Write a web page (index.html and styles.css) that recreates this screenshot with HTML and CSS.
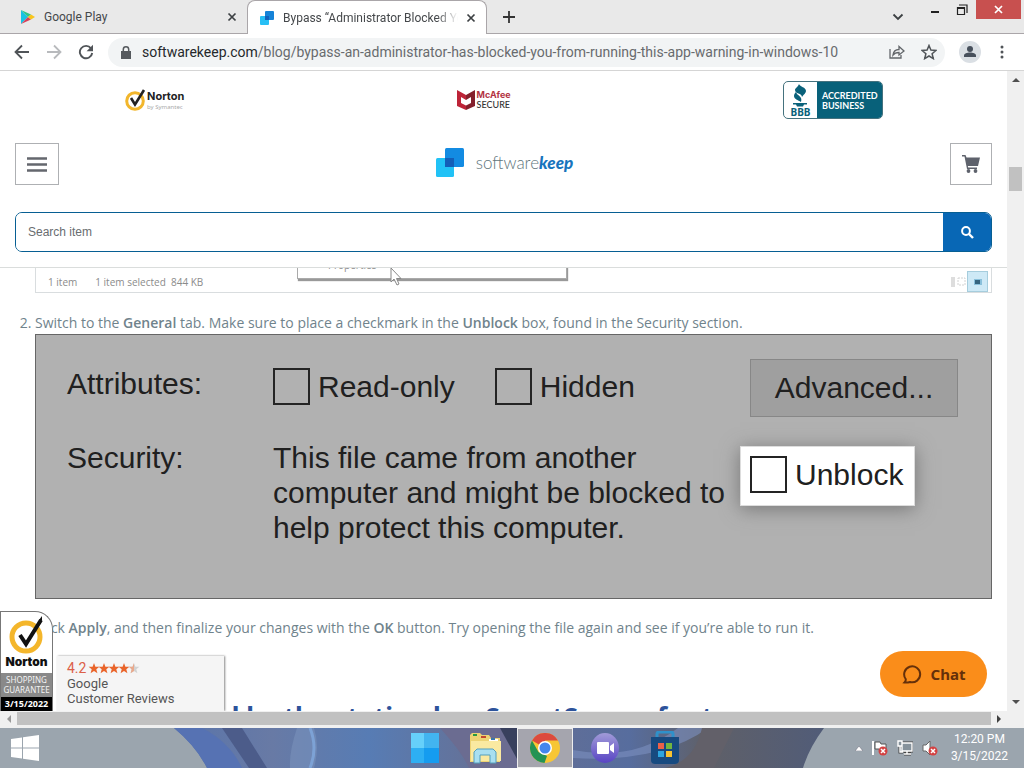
FILE: index.html
```html
<!DOCTYPE html>
<html lang="en">
<head>
<meta charset="utf-8">
<title>Bypass "Administrator Blocked You"</title>
<link rel="stylesheet" href="styles.css">
</head>
<body>
<div class="tabs">
  <div class="tab">
    <svg width="16" height="16" viewBox="0 0 16 16"><path d="M1 1v14l7-7z" fill="#18c3e4"/><path d="M1 1l7 7 3-2.5z" fill="#2fc58a"/><path d="M1 15l7-7 3 2.5z" fill="#d9415a"/><path d="M11 5.5L15 8l-4 2.5L8 8z" fill="#f8c51c"/></svg>
    <span class="tab-title">Google Play</span>
    <button class="icon-btn" aria-label="Close tab"><svg width="10" height="10" viewBox="0 0 10 10"><path d="M1.5 1.5l7 7m0-7l-7 7" stroke="#3c4043" stroke-width="1.7"/></svg></button>
  </div>
  <div class="tab tab-active">
    <svg width="16" height="16" viewBox="0 0 16 16"><rect x="1" y="6" width="9" height="9" rx="1" fill="#27bff5"/><rect x="6" y="1" width="9" height="9" rx="1" fill="#1583d8"/><path d="M6 6h4v4H6z" fill="#1262bd"/></svg>
    <span class="tab-title tab-fade">Bypass “Administrator Blocked You</span>
    <button class="icon-btn" aria-label="Close tab"><svg width="10" height="10" viewBox="0 0 10 10"><path d="M1.5 1.5l7 7m0-7l-7 7" stroke="#3c4043" stroke-width="1.7"/></svg></button>
  </div>
  <button class="icon-btn new-tab" aria-label="New tab"><svg width="14" height="14" viewBox="0 0 14 14"><path d="M7 1v12M1 7h12" stroke="#333" stroke-width="1.8"/></svg></button>
  <div class="window-controls">
    <button class="icon-btn tab-search" aria-label="Search tabs"><svg width="12" height="8" viewBox="0 0 12 8"><path d="M1.5 1.5L6 6l4.500-4.500" fill="none" stroke="#3c4043" stroke-width="1.8"/></svg></button>
    <button class="icon-btn" aria-label="Minimize"><svg width="10" height="12" viewBox="0 0 10 12"><path d="M1 8h8" stroke="#222" stroke-width="2"/></svg></button>
    <button class="icon-btn" aria-label="Restore"><svg width="12" height="12" viewBox="0 0 12 12"><path d="M1.500 3.500h7v7h-7zM3 1h8v8M1 4.500h8" fill="none" stroke="#222" stroke-width="1.200"/></svg></button>
    <button class="close-window" aria-label="Close"><svg width="9" height="9" viewBox="0 0 9 9"><path d="M1 1l7 7m0-7l-7 7" stroke="#fff" stroke-width="1.700"/></svg></button>
  </div>
</div>
<div class="toolbar">
  <button class="icon-btn" aria-label="Back"><svg width="16" height="16" viewBox="0 0 16 16"><path d="M15 8H2m6-6.500L1.500 8 8 14.500" fill="none" stroke="#505458" stroke-width="1.800"/></svg></button>
  <button class="icon-btn" aria-label="Forward"><svg width="16" height="16" viewBox="0 0 16 16"><path d="M1 8h13M8 1.500L14.500 8 8 14.500" fill="none" stroke="#b8babd" stroke-width="1.800"/></svg></button>
  <button class="icon-btn" aria-label="Reload"><svg width="16" height="16" viewBox="0 0 16 16"><path d="M13 4.300A6.200 6.200 0 1 0 14.200 9" fill="none" stroke="#505458" stroke-width="1.900"/><path d="M15 .8v6.400H8.600z" fill="#505458"/></svg></button>
  <div class="address">
    <svg width="10" height="13" viewBox="0 0 10 13"><path d="M0 5h10v8H0z" fill="#55595d"/><path d="M2.300 5V3.500a2.700 2.700 0 0 1 5.400 0V5" fill="none" stroke="#55595d" stroke-width="1.500"/></svg>
    <span class="url"><b>softwarekeep.com</b>/blog/bypass-an-administrator-has-blocked-you-from-running-this-app-warning-in-windows-10</span>
    <button class="icon-btn" aria-label="Share"><svg width="16" height="14" viewBox="0 0 16 14"><path d="M1 4v9h11v-3M4 10c.5-4 3-5.500 6-5.500V1.500L15 6l-5 4V7.500C7.500 7.500 5.500 8 4 10z" fill="none" stroke="#62666a" stroke-width="1.300"/></svg></button>
    <button class="icon-btn" aria-label="Bookmark"><svg width="16" height="16" viewBox="0 0 16 16"><path d="M8 1.500l1.900 4.600 5 .4-3.800 3.200 1.200 4.900L8 12l-4.300 2.600 1.200-4.900L1.100 6.500l5-.4z" fill="none" stroke="#505458" stroke-width="1.500"/></svg></button>
  </div>
  <button class="icon-btn" aria-label="Profile"><svg width="22" height="22" viewBox="0 0 22 22"><circle cx="11" cy="11" r="11" fill="#dadfe4"/><circle cx="11" cy="8" r="3" fill="#47505c"/><path d="M5 16v-1.500c0-2 3-3 6-3s6 1 6 3V16z" fill="#47505c"/></svg></button>
  <button class="icon-btn" aria-label="Menu"><svg width="6" height="16" viewBox="0 0 6 16" fill="#505458"><circle cx="3" cy="3" r="1.500"/><circle cx="3" cy="8" r="1.500"/><circle cx="3" cy="13" r="1.500"/></svg></button>
</div>
<div class="viewport">
  <div class="page">
    <header class="site-header">
      <div class="trust">
        <div class="norton">
          <svg width="22" height="22" viewBox="0 0 22 22"><circle cx="10" cy="12" r="8.300" fill="none" stroke="#f2b62c" stroke-width="3"/><path d="M6 9l4 6.500L19 1" fill="none" stroke="#222" stroke-width="2.600"/></svg>
          <div><strong>Norton</strong><small>by Symantec</small></div>
        </div>
        <div class="mcafee">
          <svg width="18" height="20" viewBox="0 0 18 20"><path d="M0 0l9 5v5L4 7v6l5 2.500V20l-9-4z" fill="#bd2438"/><path d="M18 0L9 5v5l5-3v6l-5 2.500V20l9-4z" fill="#84202b"/></svg>
          <div><strong>McAfee</strong><span>SECURE</span></div>
        </div>
        <div class="bbb">
          <div class="bbb-mark"><svg width="16" height="23" viewBox="0 0 16 23" fill="#09617a"><path d="M7 0c1 3 7 3 7 7 0 2-2 3-4 6 0-4-7-3-7-7 0-2 3-3 4-6z"/><path d="M4 8c1 4 7 4 5 10-3-2-7-3-7-6 0-2 1-3 2-4zM1 19h14v1.500h-3l-1 2H5l-1-2H1z"/></svg><b>BBB</b></div>
          <div class="bbb-text">ACCREDITED<br>BUSINESS</div>
        </div>
      </div>
      <div class="brand-row">
        <button class="square menu" aria-label="Open menu"><svg width="20" height="15" viewBox="0 0 20 15"><path d="M0 1.500h20M0 7.500h20M0 13.500h20" stroke="#64676e" stroke-width="2.400"/></svg></button>
        <a class="brand" href="#"><svg width="28" height="29" viewBox="0 0 28 29"><rect y="10" width="18" height="19" rx="1.500" fill="#21c2f6"/><rect x="9" width="19" height="19" rx="1.500" fill="#138be2"/><path d="M9 10h9v9H9z" fill="#135eb8"/></svg><span>software<b>keep</b></span></a>
        <button class="square" aria-label="Cart"><svg width="18" height="18" viewBox="0 0 18 18"><path d="M0 0h3.500L4.500 2.500H18L16 11H5.800l.4 1.500H15V14H5L2.500 1.500H0z" fill="#5e626c"/><circle cx="6.500" cy="16" r="1.900" fill="#5e626c"/><circle cx="13.500" cy="16" r="1.900" fill="#5e626c"/></svg></button>
      </div>
      <form class="search">
        <input type="text" placeholder="Search item" aria-label="Search item">
        <button type="button" aria-label="Search"><svg width="13" height="13" viewBox="0 0 13 13"><circle cx="5" cy="5" r="3.900" fill="none" stroke="#fff" stroke-width="2"/><path d="M8 8l4 4" stroke="#fff" stroke-width="2.400"/></svg></button>
      </form>
    </header>
    <main class="article">
      <div class="explorer">
        <span>1 item</span><span>1 item selected&nbsp; 844 KB</span>
        <div class="context"><span>Properties</span><svg width="13" height="20" viewBox="0 0 13 20"><path d="M1 1v14l3-3 3 6 2-1-2.500-5.500H11z" fill="#fff" stroke="#888"/></svg></div>
        <div class="views"><svg width="16" height="12" viewBox="0 0 16 12"><path d="M1 1h4v10H1z" fill="#ddd"/><path d="M8 2h7v7H8z" fill="none" stroke="#d2d2d2" stroke-dasharray="2 1"/></svg><i><svg width="8" height="6" viewBox="0 0 8 6"><path d="M0 0h8v6H0z" fill="#8ac0db"/><path d="M1 1h5v4H1z" fill="#36647e"/></svg></i></div>
      </div>
      <ol start="2">
        <li>Switch to the <b>General</b> tab. Make sure to place a checkmark in the <b>Unblock</b> box, found in the Security section.
          <div class="properties">
            <span>Attributes:</span>
            <div class="checks">
              <label><input type="checkbox">Read-only</label>
              <label><input type="checkbox">Hidden</label>
            </div>
            <button>Advanced...</button>
            <span class="security">Security:</span>
            <p>This file came from another<br>computer and might be blocked to<br>help protect this computer.</p>
            <label class="unblock"><input type="checkbox">Unblock</label>
          </div>
        </li>
        <li>Click <b>Apply</b>, and then finalize your changes with the <b>OK</b> button. Try opening the file again and see if you’re able to run it.</li>
      </ol>
      <h2>d by the station has SmartScreen for t</h2>
    </main>
    <aside class="guarantee">
      <div class="guarantee-top"><svg width="38" height="38" viewBox="0 0 38 38"><circle cx="18" cy="21" r="14" fill="none" stroke="#f4b62b" stroke-width="5"/><path d="M12 19l6 9L33 4" fill="none" stroke="#111" stroke-width="4"/><path d="M31 4l3-4v5z" fill="#111"/></svg><b>Norton</b></div>
      <div class="guarantee-mid">SHOPPING<br>GUARANTEE</div>
      <div class="guarantee-date">3/15/2022</div>
    </aside>
    <aside class="reviews">
      <div class="rating">4.2 <svg width="52" height="11" viewBox="0 0 52 11"><defs><path id="star" d="M5 0l1.400 3.700 4 .1-3.100 2.500 1.100 4L5 8 1.600 10.300l1.100-4L-.4 3.800l4-.1z"/></defs><g fill="#e9642a"><use href="#star" x="1"/><use href="#star" x="11"/><use href="#star" x="21"/><use href="#star" x="31"/></g><use href="#star" x="41" fill="#d2d2d2"/><path d="M41 3.800l3.500-.1L46 0v8l-3.400 2.300 1-4z" fill="#e9a98c"/></svg></div>
      <span>Google</span><span>Customer Reviews</span>
    </aside>
    <button class="chat"><svg width="20" height="20" viewBox="0 0 20 20"><path d="M2.500 18.500c1-1 1.500-2 1.200-3.500A8 8 0 1 1 8 18c-2 .6-3.500.7-5.500.5z" fill="none" stroke="#65300a" stroke-width="2"/></svg>Chat</button>
  </div>
  <div class="vscroll"><svg width="8" height="4" viewBox="0 0 8 4"><path d="M0 4l4-4 4 4z" fill="#505050"/></svg><div class="vthumb"></div><svg width="8" height="4" viewBox="0 0 8 4"><path d="M0 0l4 4 4-4z" fill="#505050"/></svg></div>
</div>
<div class="hscroll"><svg width="4" height="8" viewBox="0 0 4 8"><path d="M4 0L0 4l4 4z" fill="#999"/></svg><div class="hthumb"></div><svg width="4" height="8" viewBox="0 0 4 8"><path d="M0 0l4 4-4 4z" fill="#404040"/></svg></div>
<footer class="taskbar">
  <svg class="wallpaper" viewBox="0 0 1024 40" preserveAspectRatio="none">
    <defs><linearGradient id="wall"><stop offset="0" stop-color="#5974aa"/><stop offset=".15" stop-color="#687aa5"/><stop offset=".3" stop-color="#577cb4"/><stop offset=".5" stop-color="#686f91"/><stop offset=".7" stop-color="#576d9e"/><stop offset=".82" stop-color="#5f6068"/><stop offset="1" stop-color="#515c78"/></linearGradient></defs>
    <path d="M0 0h1024v40H0z" fill="#9ba5ae"/><path d="M174 0h650q-15 20-21 40H207Q196 18 174 0z" fill="url(#wall)"/>
    <path d="M174 0h28q28 14 40 40h-35Q196 18 174 0z" fill="#5672b3"/><path d="M222 0h20l25 40h-18z" fill="#4c5c8a"/>
    <path d="M297 0q-8 24-7 40h24q6-22 0-40z" fill="#8099c2" opacity=".45"/><path d="M310 0q8 20 0 40" fill="none" stroke="#7da2d5" stroke-width="3"/>
    <path d="M440 0q22 24 29 40h48V0z" fill="#6b6c91"/><path d="M500 0l22 40h30V0z" fill="#38405d"/><path d="M573 22q60 12 105-22h30q-48 35-135 30z" fill="#7c8fc0" opacity=".6"/>
    <path d="M665 40q30-7 37-40h32l-20 40z" fill="#626069"/>
  </svg>
  <button class="task start" aria-label="Start"><svg width="28" height="26" viewBox="0 0 28 26"><path d="M0 4l11-1.500v10H0zM12 2.300L28 0v12.500H12zM0 13.500h11v10L0 22zM12 13.500h16V26l-16-2.300z" fill="#fff"/></svg></button>
  <div class="tasks">
    <button class="task" aria-label="Windows"><svg width="28" height="30" viewBox="0 0 28 30"><path d="M0 0h13v15H0z" fill="#66d0fa"/><path d="M13 0h15v15H13z" fill="#42b4f0"/><path d="M0 15h13v15H0z" fill="#2eaff3"/><path d="M13 15h15v15H13z" fill="#159cf0"/></svg></button>
    <button class="task" aria-label="File Explorer"><svg width="34" height="32" viewBox="0 0 34 32"><path d="M2 3l2-2h8l2 2h7l2 3h9v24H2z" fill="#edd374"/><path d="M3 9h30v20H3z" fill="#fae9a1"/><path d="M5 2h4v2H5z" fill="#2a9a42"/><path d="M13 4h5v2h-5z" fill="#c4472f"/><path d="M21 7h9v2h-9z" fill="#fff"/><path d="M23 6h4v2h-4z" fill="#3977ad"/><path d="M6 31V20l3-3h16l3 3v11h-6v-8H12v8z" fill="#a9dff0" stroke="#559fbd"/></svg></button>
    <button class="task current" aria-label="Chrome"><svg width="30" height="30" viewBox="0 0 30 30"><circle cx="15" cy="15" r="15" fill="#f7c634"/><path d="M15 15L2 7.500A15 15 0 0 1 28 7.500H15z" fill="#dc4a3e"/><path d="M2 7.500L8.500 19 15 22l2 1-2.500 7A15 15 0 0 1 2 7.500z" fill="#249354"/><circle cx="15" cy="15" r="7" fill="#fff"/><circle cx="15" cy="15" r="5.500" fill="#4486ed"/></svg></button>
    <button class="task" aria-label="Meet"><svg width="28" height="30" viewBox="0 0 28 30"><defs><linearGradient id="meet" x2="0" y2="1"><stop stop-color="#a19bd8"/><stop offset="1" stop-color="#5844c4"/></linearGradient></defs><ellipse cx="14" cy="15" rx="14" ry="15" fill="url(#meet)"/><rect x="6" y="9" width="12" height="12" rx="1" fill="#fff"/><path d="M19 13l4-3v10l-4-3z" fill="#fff"/></svg></button>
    <button class="task" aria-label="Store"><svg width="30" height="34" viewBox="0 0 30 34"><path d="M7 7V3q0-2 2-2h12q2 0 2 2v4" fill="none" stroke="#2f91ca" stroke-width="3"/><path d="M1 6h28v23q0 4-4 4H5q-4 0-4-4z" fill="#174a80"/><path d="M8 12h6v6H8z" fill="#ec6148"/><path d="M16 12h6v6h-6z" fill="#72b540"/><path d="M8 20h6v6H8z" fill="#2ca5e0"/><path d="M16 20h6v6h-6z" fill="#f7c331"/></svg></button>
  </div>
  <div class="tray">
    <svg width="8" height="5" viewBox="0 0 8 5"><path d="M0 5l4-5 4 5z" fill="#fff" stroke="#667" stroke-width=".5"/></svg>
    <svg width="16" height="16" viewBox="0 0 16 16"><path d="M1 1v14" stroke="#fff" stroke-width="2"/><path d="M3 2h5l1 2h5v6H8L7 9H3z" fill="#fff" stroke="#555"/><circle cx="11" cy="11" r="4.500" fill="#d34242"/><path d="M9 9l4 4m0-4l-4 4" stroke="#fff" stroke-width="1.500"/></svg>
    <svg width="16" height="16" viewBox="0 0 16 16"><path d="M5 3h10v8H5zM7 14h7M10 11v3M3 6v6h3" fill="none" stroke="#444" stroke-width="3"/><path d="M5 3h10v8H5zM7 14h7M10 11v3M3 6v6h3M1 1h4v5H1z" fill="#87939c" stroke="#fff" stroke-width="1.400"/></svg>
    <svg width="16" height="16" viewBox="0 0 16 16"><path d="M1 5h3l4-4v14l-4-4H1z" fill="#fff" stroke="#666"/><circle cx="11" cy="11" r="4.500" fill="#d34242"/><path d="M9 9l4 4m0-4l-4 4" stroke="#fff" stroke-width="1.500"/></svg>
    <div class="clock">12:20 PM<br>3/15/2022</div>
  </div>
</footer>
</body>
</html>
```
FILE: styles.css
```css
* { box-sizing: border-box; }
body { margin: 0; height: 100vh; display: flex; flex-direction: column; overflow: hidden; background: #fff; font-family: "Noto Sans", sans-serif; }
button { font-family: inherit; padding: 0; border: 0; background: none; }
svg { display: block; flex: none; }

.icon-btn { display: flex; align-items: center; justify-content: center; flex: none; }
.tabs { display: flex; flex: none; height: 34px; background: #e9e9e9; border-bottom: 1px solid #aaa6a9; }
.tab { width: 247px; display: flex; align-items: center; gap: 8px; padding: 0 10px 0 20px; font-size: 12px; color: #45484b; }
.tab-title { flex: 1; overflow: hidden; white-space: nowrap; font-family: Roboto, sans-serif; }
.tab-active { width: 240px; height: 34px; padding: 0 10px 0 11px; background: #fff; border: 1px solid #aaa6a9; border-bottom: 0; border-radius: 8px 8px 0 0; }
.tab-fade { mask-image: linear-gradient(90deg, #000 88%, transparent); }
.new-tab { width: 44px; }
.window-controls { margin-left: auto; display: flex; align-items: flex-start; gap: 16px; padding-right: 3px; }
.window-controls .icon-btn { height: 20px; }
.window-controls .tab-search { height: 34px; margin-right: 10px; }
.close-window { width: 45px; height: 19px; margin-left: -8px; display: flex; align-items: center; justify-content: center; background: #c8504f; }

.toolbar { display: flex; flex: none; align-items: center; height: 37px; gap: 16px; padding: 0 19px 0 14px; border-bottom: 1px solid #d5d5d5; }
.toolbar > :last-child { margin-left: 2px; }
.address { flex: 1; min-width: 0; height: 29px; display: flex; align-items: center; gap: 16px; padding: 0 8px 0 13px; margin: 0 -2px; border-radius: 15px; background: #f2f4f5; }
.url { flex: 1; overflow: hidden; white-space: nowrap; font: 14px/20px Roboto, sans-serif; color: #686b6e; margin-left: -5px; }
.url b { font-weight: 400; color: #25282b; }

.viewport { flex: 1; min-height: 0; display: flex; }
.page { position: relative; flex: 1; min-width: 0; overflow: hidden; }
.site-header { padding: 10px 15px 15px; border-bottom: 1px solid #dadddc; background: #fff; }
.trust { display: flex; justify-content: space-between; align-items: center; padding: 0 109px 0 110px; height: 38px; }
.norton, .mcafee { display: flex; align-items: center; gap: 0; }
.norton strong, .norton small, .mcafee strong, .mcafee span { display: block; }
.norton strong { font: bold 11px/14px Inter, sans-serif; color: #222; }
.norton small { font-size: 6px; line-height: 8px; color: #aaa; }
.mcafee { gap: 2px; }
.mcafee strong { font: bold 9px/10px Inter, sans-serif; color: #b33443; }
.mcafee span { font: 500 9px/10px Lato, sans-serif; color: #333; }
.bbb { display: flex; width: 100px; height: 38px; border: 1px solid #45727e; border-radius: 5px; overflow: hidden; background: #fff; }
.bbb-mark { width: 33px; display: flex; flex-direction: column; align-items: center; padding-top: 2px; color: #09617a; font-size: 10px; line-height: 11px; }
.bbb-text { flex: 1; padding: 9px 0 0 5px; background: #08617a; color: #fff; font: bold 9px/10px Lato, sans-serif; }
.brand-row { display: flex; align-items: center; justify-content: space-between; margin: 24px 0 27px; }
.square { width: 42px; height: 42px; display: flex; align-items: center; justify-content: center; border: 1px solid #aeb0b3; background: #fff; }
.menu { width: 44px; }
.brand { display: flex; align-items: center; gap: 12px; padding-bottom: 4px; color: #61757c; text-decoration: none; font: 300 17px Lato, sans-serif; }
.brand b { font-weight: 900; font-style: italic; color: #1874bd; }
.search { display: flex; height: 40px; border: 1px solid #075f93; border-radius: 7px; overflow: hidden; }
.search input { flex: 1; min-width: 0; border: 0; outline: 0; padding: 0 12px; background: #fff; font: 12px "Liberation Sans", sans-serif; }
.search input::placeholder { color: #696d70; }
.search button { width: 48px; display: flex; align-items: center; justify-content: center; background: #0867b5; }

.article { padding: 0 15px 0 0; color: #70838c; font: 14px/22px "Open Sans", sans-serif; }
.article li b { font-weight: 600; }
.explorer { position: relative; display: flex; align-items: center; gap: 18px; height: 25px; margin-left: 35px; padding: 3px 3px 0 12px; border: solid #d9dddf; border-width: 0 1px 1px; overflow: clip; font: 10px "Open Sans", sans-serif; color: #8b8b8b; }
.context { position: absolute; left: 261px; top: -10px; width: 270px; height: 21px; padding-left: 30px; border: 1px solid #aaa; box-shadow: 1px 2px 1px #999; background: #fff; font: 10px/13px "Open Sans", sans-serif; }
.context svg { position: absolute; left: 92px; top: 8px; }
.views { display: flex; align-items: center; gap: 1px; margin-left: auto; }
.views i { width: 21px; height: 21px; display: flex; align-items: center; justify-content: center; background: #cee9f6; border: 1px solid #a6cddd; }
ol { margin: 19px 0 0; padding-left: 35px; }
li { margin-bottom: 18px; }
.properties { height: 265px; display: grid; grid-template: 58px 92px / 206px 1fr 208px; row-gap: 25px; padding: 24px 33px 0 31px; border: 1px solid #666; background: #b1b1b1; color: #202020; font: 30px/35px "Liberation Sans", sans-serif; }
.properties > span { padding-top: 7px; }
.checks { display: flex; align-items: center; gap: 40px; padding-bottom: 4px; }
.checks label, .unblock { display: flex; align-items: center; gap: 8px; white-space: nowrap; }
.properties input { appearance: none; flex: none; width: 37px; height: 37px; margin: 0; border: 2px solid #242424; }
.properties button { border: 1px solid #878787; background: #9f9f9f; color: #202020; font: 30px "Liberation Sans", sans-serif; }
.properties > .security { padding-top: 0; }
.properties .security, .properties p { margin: -2px 0 0; white-space: nowrap; }
.unblock { justify-self: start; align-self: start; width: 175px; height: 60px; margin: 4px 0 0 -10px; padding: 0 0 3px 9px; background: #fff; box-shadow: 0 3px 18px #777; border: 1px solid #ddd; }
h2 { margin: 61px 0 0 223px; color: #2d539b; font: bold 26px/34px "Noto Sans", sans-serif; white-space: nowrap; }

.guarantee { position: absolute; left: 0; bottom: 0; width: 53px; height: 100px; border: 1px solid #777; border-bottom: 0; border-top-right-radius: 18px; overflow: hidden; background: #fff; text-align: center; }
.guarantee-top { height: 61px; display: flex; flex-direction: column; align-items: center; padding-top: 4px; color: #111; font: bold 12px/16px Inter, sans-serif; }
.guarantee-mid { height: 24px; padding-top: 2px; background: #898989; color: #f4f4f4; font: 8px/10px "Noto Sans", sans-serif; }
.guarantee-date { height: 15px; background: #000; color: #fff; font: bold 9px/14px "Noto Sans", sans-serif; }
.reviews { position: absolute; left: 57px; bottom: 0; width: 167px; height: 55px; padding: 5px 10px 0; background: #f5f5f5; box-shadow: 1px 0 2px #888; color: #555; font: 13px/15px Roboto, sans-serif; }
.reviews span { display: block; }
.rating { display: flex; align-items: center; gap: 2px; font-size: 14px; color: #dc6048; }
.chat { position: absolute; right: 20px; bottom: 14px; width: 107px; height: 46px; border-radius: 23px; display: flex; align-items: center; justify-content: center; gap: 9px; background: #fa8d1a; color: #65300a; font-size: 15px; font-weight: 700; }
.vscroll { width: 17px; display: flex; flex-direction: column; align-items: center; padding: 7px 0; background: #f0f0f0; }
.vthumb { width: 13px; height: 24px; margin: 85px 0 auto; background: #c1c1c1; }
.hscroll { flex: none; display: flex; align-items: center; gap: 6px; height: 17px; padding: 0 23px 2px 7px; background: #f0f0f0; }
.hthumb { flex: 1; height: 13px; background: #c1c1c1; }

.taskbar { position: relative; flex: none; display: flex; height: 40px; overflow: hidden; background: #9ba5ae; }
.wallpaper { position: absolute; inset: 0; width: 100%; height: 100%; }
.task { position: relative; width: 56px; height: 40px; display: flex; align-items: center; justify-content: center; border: 1px solid transparent; }
.start { width: 50px; }
.tasks { position: relative; flex: 1; display: flex; gap: 4px; padding-left: 347px; }
.current { border-color: #eee; background: #a5a5ae; }
.tray { position: relative; display: flex; align-items: center; gap: 9px; padding-right: 16px; }
.clock { margin-left: 4px; color: #fff; text-align: center; font: 12px/17px Roboto, sans-serif; }
```
